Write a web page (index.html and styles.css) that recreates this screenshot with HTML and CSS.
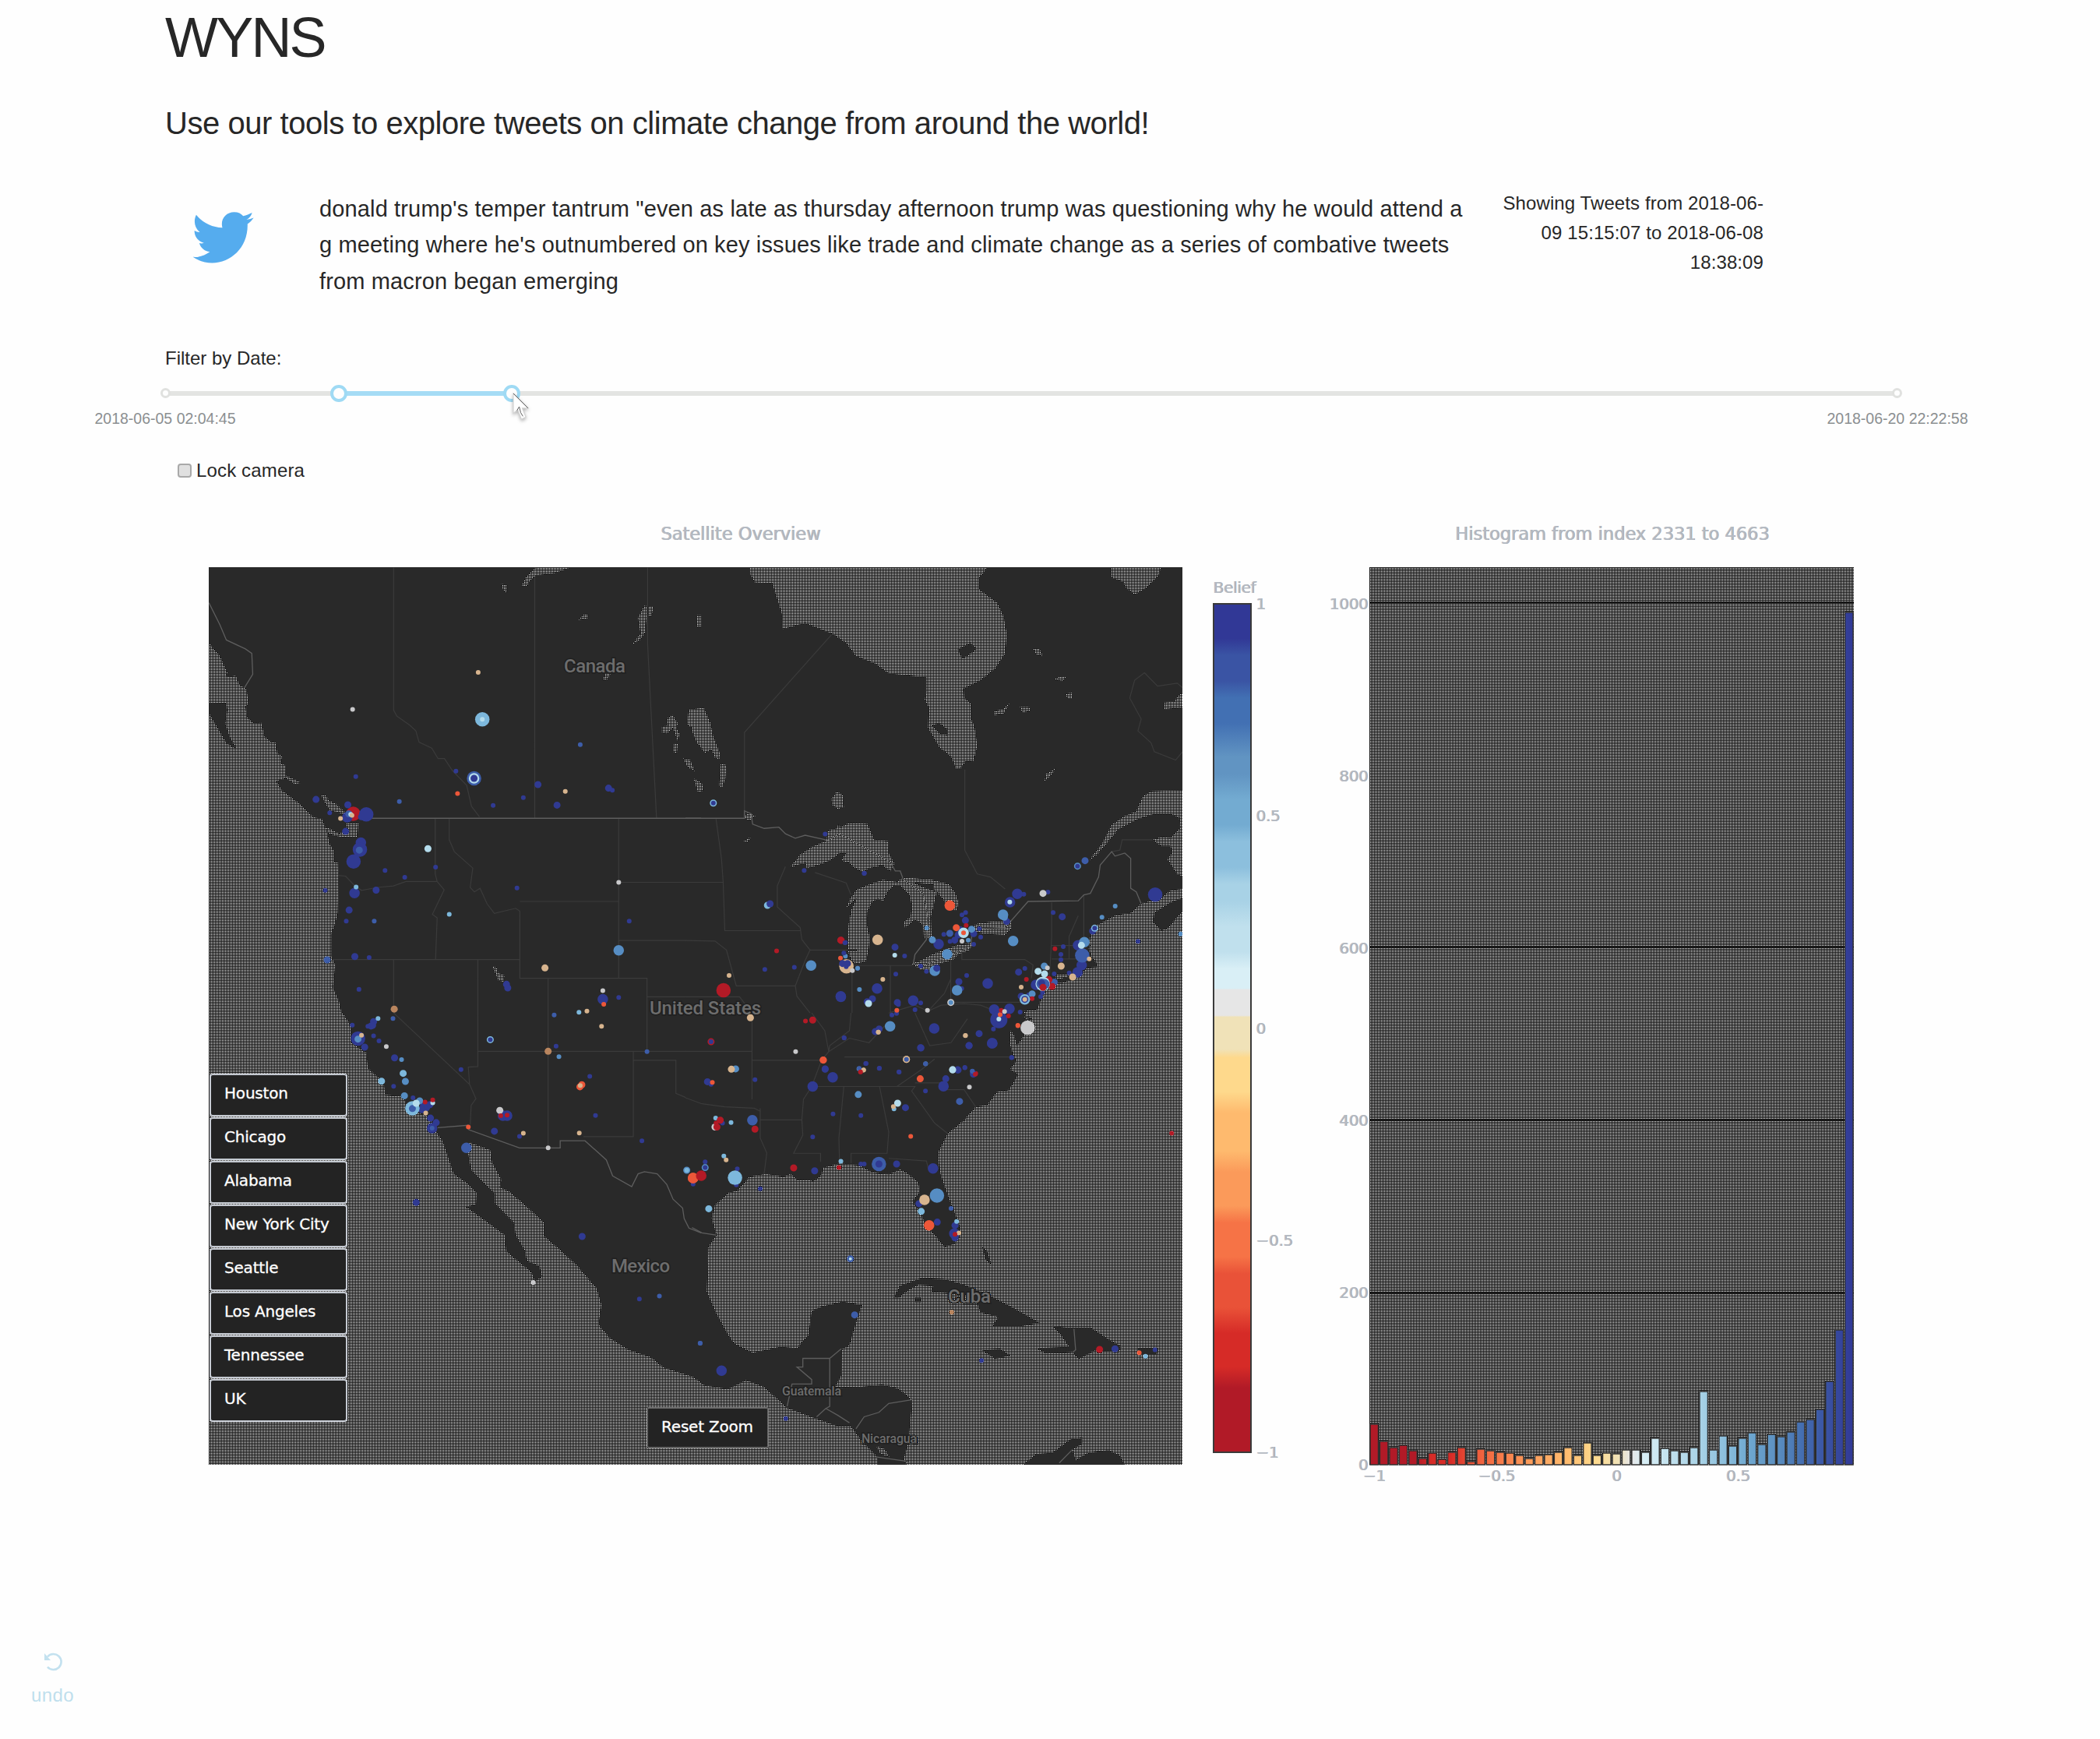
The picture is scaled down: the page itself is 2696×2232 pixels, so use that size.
FILE: index.html
```html
<!DOCTYPE html>
<html lang="en">
<head>
<meta charset="utf-8">
<title>WYNS</title>
<link rel="stylesheet" href="styles.css">
</head>
<body>
<main class="page">
<h1 class="title"><span>WYNS</span></h1>
<h2 class="subtitle"><span>Use our tools to explore tweets on climate change from around the world!</span></h2>

<section class="tweet">
<svg class="bird" viewBox="0 0 240 202"><path fill="#55acee" d="M2 178C28 180 48 172 68 158C47 156 32 142 27 124C34 126 40 125 45 123C22 117 8 98 8 75C15 79 22 81 29 81C9 65 3 38 15 14C40 44 76 62 117 64C108 31 130 3 163 3C179 3 190 9 198 18C211 15 221 11 233 5C229 18 221 27 211 32C221 31 230 29 239 25C232 35 225 43 215 49C218 140 151 201 77 201C50 201 24 193 2 178Z"/></svg>
<p class="tweet-text"><span>donald trump's temper tantrum "even as late as thursday afternoon trump was questioning why he would attend a</span><br><span>g meeting where he's outnumbered on key issues like trade and climate change as a series of combative tweets</span><br><span>from macron began emerging</span></p>
<p class="range-text"><span>Showing Tweets from 2018-06-</span><br><span>09 15:15:07 to 2018-06-08</span><br><span>18:38:09</span></p>
</section>

<label class="filter-label">Filter by Date:</label>
<div class="slider">
<div class="rail"></div><div class="track"></div>
<i class="dot start"></i><i class="dot end"></i>
<i class="handle low"></i><i class="handle high"></i>
<span class="mark first">2018-06-05 02:04:45</span><span class="mark last">2018-06-20 22:22:58</span>
<svg class="cursor" viewBox="0 0 24 38"><path d="M2 1V28L8 23L13 36L19 33L14 21H22Z" fill="#fff" stroke="#d4d4d4" stroke-width="1.2"/><path d="M2 1L22 21M7 24L10 19L12 27L15 32" fill="none" stroke="#555" stroke-width="1"/></svg>
</div>
<label class="lock"><i class="box"></i>Lock camera</label>

<section class="plots">
<div class="map-col">
<h3 class="plot-title"><span>Satellite Overview</span></h3>
<div class="map-row">
<div class="map">
<svg class="map-svg" viewBox="268 728 1250 1152">
<defs>
<pattern id="sea" x="268" y="728" width="2" height="2" patternUnits="userSpaceOnUse"><rect width="2" height="2" fill="#191919"/><rect x="1" y="1" width="1" height="1" fill="#fff"/></pattern>
<clipPath id="water">
<path transform="translate(260 720) scale(.408163 .382653)" d="M20 275L35 295 55 320 65 345 78 375 72 390 105 385 115 415 138 430 145 475 135 490 140 525 160 545 185 543 195 590 212 605 230 610 235 645 250 655 245 680 260 685 262 720 300 738 308 745 290 748 262 728 232 738 250 770 300 810 350 860 375 865 390 905 400 950 412 970 412 1010 425 1010 428 1070 425 1180 417 1215 405 1250 405 1325 417 1355 410 1430 430 1480 440 1530H20ZM373 785L385 785 400 805 420 815 445 840 450 850 430 845 400 835 385 810ZM452 880L490 880 487 925 440 928 400 915 385 895 395 895 430 915 450 905 455 895ZM940 77L958 80 958 108 945 95ZM1003 85L1020 50 1050 22 1155 22 1110 40 1050 48 1030 65 1020 85ZM1183 198L1200 180 1213 178 1210 192ZM1370 190L1390 150 1418 155 1412 185 1397 180 1392 240 1375 265 1350 280 1378 245ZM1258 400L1268 378 1284 376 1275 395ZM1460 530L1478 517 1495 545 1490 560 1500 580 1495 605 1480 560 1460 578 1445 575 1445 555 1465 553ZM1483 615L1495 612 1492 645 1482 640ZM1512 662L1535 670 1548 705 1525 690ZM912 1360L925 1365 930 1382 950 1390 945 1412 930 1405Z"/>
<path transform="translate(260 1300) scale(.408163 .382653)" d="M20 -10L440 0 465 40 468 100 515 135 520 185 570 235 575 275 630 280 650 330 710 345 735 400 755 430 790 540 830 570 862 605 860 643 828 650 880 690 950 745 955 800 1035 870 1045 900 1068 885 1060 850 1020 832 1015 800 985 745 980 705 920 640 920 605 890 575 845 525 835 470 840 435 905 460 910 500 940 560 935 585 965 600 1020 650 1075 705 1075 750 1130 800 1180 850 1240 925 1255 980 1245 1045 1280 1090 1340 1130 1410 1155 1450 1190 1540 1220 1568 1240V1516H20Z"/>
<path transform="translate(880 720) scale(.420918 .382653)" d="M197 21L198 45 212 72 265 75 275 110 295 180 297 228 365 208 450 245 490 275 520 318 580 345 620 377 735 390 735 440 730 465 742 490 740 560 775 625 810 655 825 695 838 697 855 670 878 672 890 620 885 580 880 550 870 530 872 480 850 460 848 428 900 400 945 360 975 310 980 245 970 185 950 140 895 95 893 60 915 30 920 21ZM1297 21L1300 55 1335 70 1345 90 1370 113 1405 90 1430 65 1442 50 1450 21ZM35 182H47V220H33ZM1060 293L1078 293 1090 318 1070 313ZM1125 398L1140 388 1160 390 1150 402ZM1160 445L1178 442 1180 460 1165 462ZM943 503L968 498 988 478 970 512 943 517ZM1020 490L1048 490 1052 502 1028 508ZM1095 740L1100 715 1130 695 1110 725ZM1460 475L1490 472 1510 445H1516V490L1460 497ZM10 500L55 492 75 540 85 590 105 645 103 665 90 660 80 632 60 643 35 610 20 570 22 558 5 550ZM0 665L15 668 28 705 15 695ZM25 730L50 745 55 770 38 775ZM108 680L125 685 122 730 112 760 103 755ZM178 862L190 845 213 855 195 870ZM178 940L200 925 190 942ZM445 800L462 773 480 785 483 825 465 832 450 820ZM320 1027L350 985 385 960 430 938 435 905 462 897 467 880 470 895 500 878 555 882 575 935 618 940 620 980 637 1015 625 1040 600 1020 560 1030 540 1042 510 1025 500 1012 475 1005 490 980 470 980 440 1005 405 1020 370 1030 365 1012ZM1230 1005L1270 950 1300 885 1340 855 1375 840 1395 790 1420 773 1516 768V1058L1500 1050 1470 1000 1485 980 1480 955 1450 955 1425 935 1455 925 1480 930 1510 895 1505 860 1480 848 1430 848 1380 865 1320 900 1290 940 1255 985ZM1516 1100L1480 1105 1450 1130 1390 1150 1360 1180 1310 1190 1250 1225 1235 1260 1230 1300 1240 1330 1255 1350 1258 1362 1225 1365 1200 1395 1150 1415 1130 1415 1100 1440 1085 1470 1070 1510 1030 1510 1050 1545 1030 1530H1516ZM1130 1385H1175L1165 1395 1130 1405Z"/>
<path transform="translate(1050 1020) scale(.333333)" d="M110 435L125 400 150 365 200 345 250 328 300 335 320 345 290 352 270 370 250 410 235 400 210 410 190 450 188 500 200 550 195 600 185 640 150 652 130 640 115 600 118 500 130 440 150 400 140 405ZM300 340L330 318 440 328 505 345 530 380 542 415 535 445 510 440 480 400 458 372 452 400 435 470 438 545 425 555 408 550 405 500 375 480 335 512 332 490 357 470 362 430 355 390 325 355ZM360 650L395 640 440 615 480 600 540 578 600 572 580 600 540 615 520 635 470 650 430 672 400 675ZM590 510L620 495 690 487 745 485 745 515 720 540 640 535 590 525Z"/>
<path transform="translate(880 1300) scale(.420918 .382653)" d="M1040 -10L1055 20 1030 80 1012 110 1000 70 985 55 990 60 988 100 1000 140 1010 160 990 190 1015 205 1000 235 985 260 950 265 920 310 885 315 850 360 800 405 770 470 775 530 790 580 810 640 835 710 840 745 820 775 790 785 760 745 735 715 715 670 692 633 715 600 710 570 680 540 655 525 620 542 570 535 530 512 470 505 420 520 415 545 390 565 380 562 340 560 320 540 300 550 245 540 195 550 160 595 130 605 90 645 80 690 95 745 70 785 65 935 95 1010 130 1080 150 1110 205 1140 290 1120 340 1125 375 1080 385 1000 415 985 480 968 538 980 520 1040 500 1115 475 1130 478 1210 455 1258 530 1255 600 1247 650 1260 692 1300 685 1380 680 1440 665 1500 675 1516H1516V-10ZM0 1222L60 1250 130 1262 185 1232 240 1255 310 1325 370 1350 460 1385 505 1387 540 1440 585 1490V1516H0ZM583 1455L605 1460 622 1488 595 1480Z"/>
</clipPath>
</defs>
<rect x="268" y="728" width="1250" height="1152" fill="#292929"/>
<rect x="268" y="728" width="1250" height="1152" fill="url(#sea)" clip-path="url(#water)" shape-rendering="crispEdges"/>
<g class="land">
<path transform="translate(260 720) scale(.408163 .382653)" d="M20 475L75 478 78 500 72 545 85 590 105 625 100 628 75 610 50 565 20 510Z"/>
<path transform="translate(880 720) scale(.420918 .382653)" d="M830 297L868 275 888 295 860 318 845 328ZM750 550L775 545 800 565 800 585 775 580ZM1516 1130L1480 1145 1430 1180 1427 1210 1450 1240 1470 1232 1516 1175Z"/>
<path transform="translate(1050 1020) scale(.333333)" d="M365 337L445 345 450 372 400 355Z"/>
<path transform="translate(880 1300) scale(.420918 .382653)" d="M635 955L655 915 720 890 790 893 850 912 930 950 1000 990 1080 1040 1020 1052 935 1052 955 1020 900 1005 890 975 850 945 800 940 750 935 755 915 710 912 680 930 650 955ZM700 955H718V970H700ZM903 1130L960 1127 990 1150 945 1160ZM1118 1050L1160 1055 1235 1055 1290 1095 1330 1120 1320 1138 1250 1132 1200 1160 1180 1138 1100 1143 1072 1125 1170 1120 1145 1080ZM1380 1125H1440L1438 1145 1385 1147ZM905 785L920 800 935 850 915 825ZM1030 1516L1070 1480 1120 1475 1175 1430 1210 1425 1210 1445 1180 1465 1190 1500 1230 1475 1290 1467 1325 1485 1340 1516Z"/>
</g>
<g class="border">
<path transform="translate(260 720) scale(.408163 .382653)" d="M601 22V500l10 20 40 30 20 20 10 38 40 20 20 35 20 0 25 40 45 50 15 70 25 35M1045 22V862M1400 22V280L1428 862M732 865V1050L738 1075 760 1103 723 1185 738 1197 733 1337M776 865V935L792 975 850 1030 842 1095 855 1110 873 1098 895 1150 918 1182 985 1165 998 1175V1400H1398V1516M998 1142H1309V862M1309 1078H1520M1309 1273H1520M1309 1142V1400M412 1337H998M428 1055L450 1057 475 1085 500 1105 550 1095 600 1090 640 1075H738M601 1337V1516M866 1337V1516M1087 1400V1516M1398 1462H1520"/>
<path transform="translate(260 1300) scale(.408163 .382653)" d="M601 0L840 240 860 288 845 310 842 375M866 0V180l-30 2 4 60M866 129H1520M1087 0V453M1398 0V129M1355 129V415H1198M1355 159H1489V270l31 14"/>
<path transform="translate(880 720) scale(.420918 .382653)" d="M180 863V575L445 248M852 700V970L890 1050 930 1060 975 1100M93 863L110 1000 115 1078H0M115 1078L120 1240H350M0 1273L90 1275 125 1305 155 1425H335M0 1462H165L203 1516M305 1025L280 1090 280 1160 350 1230 355 1270 380 1305 365 1340 335 1425 340 1460 380 1516M380 1305H525M508 1350V1516M625 1357V1516M508 1357H695M843 1305V1337H1035L1060 1355 1055 1400M809 1337V1480H1030M1117 1145V1260L1110 1400M1198 1190L1170 1260V1335M1215 1120V1290M1117 1290H1235M1117 1335H1190M1400 375L1370 400 1355 460 1390 530 1380 570 1420 610 1430 640 1495 668 1516 640M1400 375L1440 420 1500 410 1516 425M1425 935L1332 935 1325 970 1300 975M395 1045L490 1080 505 1120M620 1516L700 1490 740 1510 790 1450 810 1400M740 1510L780 1490 850 1485 900 1490 960 1516"/>
<path transform="translate(880 1300) scale(.420918 .382653)" d="M0 129H203M203 0V290M203 159H415L437 130M485 148H1005M385 0L425 60 437 130 440 110 500 60 505 0M385 247H700L690 262 760 370 800 405M645 247L720 190 760 155M483 247L468 420 470 505M592 247L620 400 615 471H505V505M620 488L735 497 740 520M228 359H355L360 290 385 247 415 159M355 359L358 410 330 471H412V500M228 320V420L248 470 240 540M0 285L50 305 120 315 210 320 228 330M700 235H780L800 258H850L885 315M437 130L500 85 560 100 620 30M700 0L745 110 810 100 860 20"/>
</g>
<g class="border nation">
<path transform="translate(260 720) scale(.408163 .382653)" d="M20 140L55 215 75 265 135 295 155 310 158 380 132 425M533 863H1568"/>
<path transform="translate(260 1300) scale(.408163 .382653)" d="M740 385L835 377 838 392 997 453H1125V429H1203L1270 493 1290 547 1350 583 1370 540 1390 533 1430 540 1460 575 1480 625 1510 655 1515 690 1530 722 1568 738"/>
<path transform="translate(880 720) scale(.420918 .382653)" d="M0 863H180V838l20 10 5 35L240 897 285 893 305 915 335 930 365 920 435 937 470 915 625 1010 640 1040 655 1040 665 1070 725 1115 740 1200 735 1270 700 1320 695 1350 720 1360 870 1295 875 1235 975 1230 1045 1142 1198 1140 1215 1120 1235 1115 1260 1060 1265 1020 1300 975 1310 990 1340 980 1358 998V1098L1375 1110 1390 1150"/>
<path transform="translate(880 1300) scale(.420918 .382653)" d="M20 720L50 738 92 745M310 1320L325 1245H385V1230L340 1188H358V1159H440V1258M440 1159L475 1127M440 1258V1320L428 1327 400 1355M428 1327L465 1350 500 1375M520 1395L545 1355 590 1340 620 1310 690 1298M585 1490L680 1505M1140 1510L1180 1465M1185 1060L1190 1130 1180 1140"/>
</g>
<g class="country">
<text x="724" y="863" textLength="79">Canada</text><text x="834" y="1302" textLength="143">United States</text><text x="785" y="1633" textLength="75">Mexico</text><text x="1217" y="1672" textLength="55">Cuba</text><text class="minor" x="1004" y="1791" textLength="76">Guatemala</text><text class="minor" x="1106" y="1852" textLength="71">Nicaragua</text>
</g>
<g class="pts" transform="translate(260 720) scale(.408163 .382653)">
<path class="red xl" d="M474 848h.1"/>
<path class="navy s" d="M482 723h.1M797 705h.1M914 820h.1M1009 794h.1M733 1027h.1M636 1061h.1M452 1208h.1M524 1330h.1M492 1437h.1M1342 1208h.1M989 1097h.1M574 1038h.1M386 1105h.1M471 1557h.1M1309 1464h.1M1289 769h.1M400 845h.1"/>
<path class="navy m" d="M357 800h.1M1055 750h.1M1115 819h.1M1277 762h.1M461 1171h.1M479 1327h.1M450 907h.1M500 858h.1M546 1104h.1M956 1420h.1M960 1432h.1M538 1545h.1M530 1560h.1M457 818h.1"/>
<path class="navy l" d="M455 860h.1M498 945h.1M478 1114h.1M1259 1470h.1"/>
<path class="navy xl" d="M515 850h.1M495 968h.1M475 1008h.1"/>
<path class="blue s" d="M1188 616h.1M619 807h.1M540 1208h.1M1106 1523h.1M599 1535h.1"/><path class="blue m" d="M392 1338h.1M493 970h.1M460 848h.1"/><path class="blue xl" d="M854 729h.1"/>
<path class="ice l" d="M854 729h.1"/><path class="navy m" d="M854 729h.1"/>
<path class="sky xl" d="M880 531h.1"/><path class="ice s" d="M880 531h.1M466 850h.1"/>
<path class="steel l" d="M1309 1306h.1"/><path class="ice m" d="M709 965h.1"/>
<path class="sky s" d="M776 1185h.1M483 1094h.1M552 1535h.1M1184 1514h.1"/>
<path class="tan s" d="M867 374h.1M434 864h.1M1141 773h.1M1209 1510h.1M1255 1561h.1M470 853h.1"/><path class="tan m" d="M1077 1365h.1"/><path class="dtan m" d="M603 1503h.1"/>
<path class="orange s" d="M802 780h.1M1262 1487h.1"/><path class="white s" d="M472 498h.1M1309 1078h.1M1259 1441h.1"/>
</g>
<g class="pts" transform="translate(260 1300) scale(.408163 .382653)">
<path class="navy xl" d="M489 86h.1"/><path class="navy l" d="M722 387h.1M945 345h.1M958 345h.1M700 315h.1"/>
<path class="navy m" d="M535 42h.1M510 115h.1M604 151h.1M715 308h.1M735 368h.1M690 325h.1M672 636h.1M918 397h.1M1194 750h.1M717 353h.1M663 318h.1"/>
<path class="navy s" d="M520 45h.1M538 77h.1M555 94h.1M601 246h.1M662 285h.1M813 190h.1M1112 112h.1M1218 213h.1M1236 344h.1M1382 429h.1M997 414h.1M1374 960h.1M1543 574h.1"/>
<path class="blue l" d="M830 453h.1"/><path class="blue s" d="M1437 950h.1M1565 1108h.1M638 232h.1M1398 130h.1M722 387h.1"/>
<path class="steel m" d="M489 88h.1M635 278h.1M638 230h.1M1523 528h.1M683 295h.1"/><path class="steel s" d="M626 157h.1M1121 147h.1"/>
<path class="sky m" d="M563 229h.1M631 203h.1M905 90h.1"/><path class="navy s" d="M905 90h.1"/>
<path class="sky xl" d="M660 320h.1"/><path class="blue m" d="M660 321h.1"/><path class="ice m" d="M672 303h.1"/><path class="ice s" d="M724 302h.1"/>
<path class="tan s" d="M500 75h.1M1009 404h.1M1185 403h.1M702 336h.1"/><path class="dtan m" d="M1087 129h.1"/>
<path class="white s" d="M578 113h.1M1087 453h.1M1040 904h.1"/><path class="white m" d="M935 327h.1"/>
<path class="red s" d="M700 299h.1M724 292h.1M938 345h.1M958 343h.1"/><path class="orange m" d="M1193 241h.1M1187 248h.1"/><path class="orange s" d="M836 383h.1"/><path class="tan s" d="M1188 244h.1"/><path class="orange l" d="M1543 554h.1"/>
</g>
<g class="pts" transform="translate(880 720) scale(.420918 .382653)">
<path class="red xl" d="M116 1440h.1"/><path class="red m" d="M475 1273h.1M388 1540h.1"/><path class="red s" d="M278 1308h.1M366 1543h.1"/>
<path class="navy s" d="M426 916h.1M362 1038h.1M545 1048h.1M242 1370h.1M332 1363h.1M525 1366h.1M488 1280h.1"/><path class="navy l" d="M474 1462h.1"/>
<path class="sky m" d="M85 812h.1M250 1155h.1"/><path class="navy s" d="M85 812h.1"/><path class="navy m" d="M258 1150h.1"/>
<path class="steel l" d="M383 1357h.1"/><path class="tan s" d="M133 1390h.1"/><path class="tan m" d="M198 1532h.1"/>
</g>
<g class="pts" transform="translate(1050 1020) scale(.333333)">
<path class="navy s" d="M179 302h.1M555 463h.1M569 454h.1M622 516h.1M627 548h.1M600 576h.1M509 565h.1M485 538h.1M334 621h.1M300 691h.1M573 696h.1M554 746h.1M396 802h.1M374 828h.1M285 848h.1M310 808h.1M303 842h.1M886 375h.1M793 383h.1M906 454h.1M945 585h.1M936 615h.1M936 635h.1M797 669h.1M910 690h.1M968 686h.1M779 837h.1M858 778h.1M746 1012h.1M566 1050h.1M237 1053h.1M184 1035h.1M313 1068h.1M101 936h.1M1233 565h.1M396 660h.1M418 680h.1M865 762h.1M812 770h.1M676 902h.1"/>
<path class="navy m" d="M568 484h.1M727 488h.1M941 470h.1M297 587h.1M527 560h.1M543 720h.1M306 800h.1M210 786h.1M397 975h.1M582 966h.1M621 920h.1M773 683h.1M1058 525h.1M190 797h.1M540 1060h.1M28 1057h.1M221 912h.1M236 902h.1M600 535h.1M548 520h.1M540 540h.1M783 776h.1M910 722h.1"/>
<path class="navy l" d="M768 382h.1M228 746h.1M654 727h.1M367 793h.1M448 900h.1M671 957h.1M738 824h.1M679 827h.1M1002 580h.1M1016 656h.1M1000 684h.1M740 414h.1M465 575h.1M88 776h.1M840 732h.1"/>
<path class="navy xl" d="M1299 385h.1"/><path class="navy xxl" d="M697 866h.1"/><path class="blue xl" d="M1018 619h.1"/>
<path class="steel l" d="M713 462h.1M752 563h.1M536 753h.1M278 892h.1M450 678h.1M1026 568h.1M498 614h.1"/>
<path class="steel m" d="M441 559h.1M592 518h.1M1000 275h.1M718 472h.1M825 767h.1M872 660h.1"/><path class="navy s" d="M1000 275h.1"/><path class="navy m" d="M458 668h.1"/>
<path class="blue m" d="M1029 254h.1M508 534h.1M910 722h.1"/><path class="steel s" d="M419 513h.1M579 560h.1M160 750h.1M153 668h.1M1094 472h.1M1145 429h.1M415 1036h.1M158 1055h.1M1397 536h.1M106 622h.1"/>
<path class="ice s" d="M739 413h.1M296 618h.1M697 864h.1"/><path class="ice m" d="M1015 580h.1M195 804h.1M519 1059h.1M873 690h.1M848 680h.1"/><path class="sky m" d="M1066 514h.1"/><path class="navy s" d="M1066 514h.1"/>
<path class="orange l" d="M508 427h.1"/><path class="orange m" d="M533 512h.1M21 1022h.1"/><path class="orange s" d="M87 629h.1M304 830h.1M702 847h.1M770 888h.1"/><path class="red s" d="M571 503h.1M913 593h.1M803 711h.1M825 785h.1M734 852h.1M706 830h.1M164 1067h.1M608 1073h.1"/><path class="red m" d="M890 712h.1M902 738h.1M88 560h.1"/>
<path class="tan xl" d="M110 661h.1"/><path class="navy m" d="M95 650h.1M114 650h.1"/><path class="navy s" d="M100 610h.1M109 662h.1M104 570h.1"/><path class="tan l" d="M230 559h.1"/>
<path class="tan m" d="M937 660h.1M981 702h.1"/><path class="tan s" d="M250 711h.1M568 928h.1M233 914h.1M176 1060h.1M1045 632h.1M783 741h.1"/>
<path class="ice l" d="M561 532h.1"/><path class="orange s" d="M561 532h.1"/><path class="white s" d="M555 564h.1M133 677h.1M422 830h.1M719 835h.1M884 667h.1"/><path class="white m" d="M867 380h.1M512 800h.1"/><path class="steel s" d="M512 800h.1"/>
<path class="ice xl" d="M866 728h.1"/><path class="blue l" d="M862 728h.1M872 730h.1"/><path class="navy m" d="M862 726h.1"/><path class="red m" d="M867 742h.1"/>
<path class="sky l" d="M797 788h.1"/><path class="navy m" d="M797 788h.1"/><path class="tan s" d="M797 788h.1"/>
<path class="tan m" d="M341 1019h.1"/><path class="blue s" d="M341 1019h.1M595 1064h.1"/><path class="white xl" d="M808 897h.1"/>
</g>
<g class="pts" transform="translate(880 1300) scale(.420918 .382653)">
<path class="steel m" d="M624 45h.1M527 274h.1M60 519h.1M153 188h.1"/><path class="navy s" d="M60 519h.1M60 500h.1M158 523h.1M212 224h.1M450 339h.1M535 344h.1M388 416h.1M591 186h.1M551 170h.1M651 198h.1M484 84h.1M732 262h.1M896 70h.1M995 150h.1M852 184h.1M78 240h.1M113 370h.1M228 590h.1M535 507h.1M545 507h.1M306 1361h.1M903 1166h.1M1432 1130h.1M155 577h.1"/>
<path class="navy m" d="M759 52h.1M717 117h.1M865 110h.1M426 188h.1M794 221h.1M671 318h.1M644 507h.1M830 191h.1M878 205h.1M67 231h.1M394 530h.1M712 640h.1M768 702h.1M822 713h.1M822 755h.1M1310 1127h.1"/><path class="navy l" d="M936 102h.1M388 247h.1M449 216h.1M787 246h.1M755 522h.1M820 740h.1M110 1200h.1"/>
<path class="blue xl" d="M590 507h.1"/><path class="navy m" d="M590 507h.1"/><path class="blue l" d="M204 360h.1"/><path class="blue m" d="M836 297h.1M516 1013h.1M503 825h.1"/><path class="blue s" d="M45 1108h.1M732 171h.1M530 186h.1M875 196h.1M810 656h.1"/>
<path class="steel xl" d="M767 613h.1"/><path class="sky xl" d="M151 553h.1"/><path class="sky m" d="M71 657h.1M719 666h.1"/><path class="sky s" d="M139 368h.1M117 480h.1M92 353h.1M4 528h.1M474 498h.1M636 322h.1M827 700h.1M1403 1152h.1"/>
<path class="ice m" d="M815 191h.1M647 303h.1"/><path class="ice xs" d="M503 825h.1"/><path class="white s" d="M866 249h.1M336 130h.1"/><path class="white m" d="M90 383h.1"/>
<path class="tan l" d="M729 627h.1"/><path class="tan m" d="M140 189h.1M674 156h.1"/><path class="blue s" d="M674 156h.1"/><path class="tan s" d="M588 65h.1M854 76h.1M543 192h.1M634 314h.1M124 493h.1M834 738h.1"/><path class="dtan s" d="M812 1004h.1"/>
<path class="orange m" d="M716 221h.1M420 158h.1"/><path class="orange s" d="M82 233h.1M687 414h.1M1014 43h.1M1384 1140h.1"/><path class="orange l" d="M23 554h.1M743 713h.1"/>
<path class="red l" d="M48 546h.1"/><path class="red m" d="M78 97h.1M106 360h.1M96 383h.1M212 390h.1M330 520h.1M1263 1129h.1"/><path class="navy s" d="M78 97h.1"/><path class="red s" d="M93 370h.1M534 198h.1M884 206h.1M468 519h.1M822 743h.1M1483 404h.1"/>
</g>
</svg>
<div class="cities"><button>Houston</button><button>Chicago</button><button>Alabama</button><button>New York City</button><button>Seattle</button><button>Los Angeles</button><button>Tennessee</button><button>UK</button></div>
<button class="reset">Reset Zoom</button>
</div>
<div class="belief">
<div class="belief-title">Belief</div>
<div class="belief-body"><div class="ramp"></div><div class="ticks"><span>1</span><span>0.5</span><span>0</span><span>−0.5</span><span>−1</span></div></div>
</div>
</div>
</div>

<div class="hist-col">
<h3 class="plot-title"><span>Histogram from index 2331 to 4663</span></h3>
<svg class="hist" viewBox="1690 728 720 1192">
<defs>
<linearGradient id="ramp" gradientUnits="userSpaceOnUse" x1="1764" x2="2380" y1="0" y2="0"><stop offset="0" stop-color="#b11a27"/><stop offset=".09" stop-color="#b11a27"/><stop offset=".12" stop-color="#d62b27"/><stop offset=".16" stop-color="#d62b27"/><stop offset=".2" stop-color="#e95238"/><stop offset=".25" stop-color="#f67346"/><stop offset=".32" stop-color="#fb9a5a"/><stop offset=".4" stop-color="#feba6e"/><stop offset=".46" stop-color="#fed98c"/><stop offset=".51" stop-color="#f0e2b8"/><stop offset=".535" stop-color="#e6e6e6"/><stop offset=".56" stop-color="#d9eff6"/><stop offset=".62" stop-color="#c0e0ed"/><stop offset=".68" stop-color="#a8d2e6"/><stop offset=".73" stop-color="#8cbfdd"/><stop offset=".78" stop-color="#6fa8d0"/><stop offset=".84" stop-color="#5b8fc0"/><stop offset=".89" stop-color="#456fb1"/><stop offset=".94" stop-color="#3a54a4"/><stop offset="1" stop-color="#313896"/></linearGradient>
<pattern id="weave" x="1758" y="728" width="2" height="2" patternUnits="userSpaceOnUse"><rect width="2" height="2" fill="#191919"/><rect x="1" y="1" width="1" height="1" fill="#fff"/></pattern>
</defs>
<rect x="1758" y="728" width="622" height="1152" fill="url(#weave)" shape-rendering="crispEdges"/>
<g fill="none" stroke="#161616"><path d="M1758 1438H2380M1758 1659H2380" stroke-width="2"/><path d="M1758 773.500H2380M1758 1215.500H2380" stroke-width="1"/><path d="M1758 774.500H2380M1758 1216.500H2380" stroke-width="1" stroke-dasharray="3 1"/></g>
<path fill="url(#ramp)" stroke="#333" stroke-width="1.5" d="M1759 1880v-52h10.500v52zm12.440 0v-30h10.500v30zm12.440 0v-22h10.500v22zm12.440 0v-25h10.500v25zm12.440 0v-18h10.500v18zm12.440 0v-8h10.500v8zm12.440 0v-15h10.500v15zm12.440 0v-7h10.500v7zm12.440 0v-16h10.500v16zm12.440 0v-22h10.500v22zm12.440 0v-4h10.500v4zm12.440 0v-20h10.500v20zm12.440 0v-18h10.500v18zm12.440 0v-16h10.500v16zm12.440 0v-15h10.500v15zm12.440 0v-12h10.500v12zm12.440 0v-8h10.500v8zm12.440 0v-12h10.500v12zm12.440 0v-13h10.500v13zm12.440 0v-16h10.500v16zm12.440 0v-22h10.500v22zm12.440 0v-12h10.500v12zm12.440 0v-28h10.500v28zm12.440 0v-12h10.500v12zm12.440 0v-15h10.500v15zm12.440 0v-14h10.500v14zm12.440 0v-19h10.500v19zm12.440 0v-19h10.500v19zm12.440 0v-16h10.500v16zm12.440 0v-34h10.500v34zm12.440 0v-21h10.500v21zm12.440 0v-18h10.500v18zm12.440 0v-16h10.500v16zm12.440 0v-22h10.500v22zm12.440 0v-94h10.500v94zm12.440 0v-19h10.500v19zm12.440 0v-37h10.500v37zm12.440 0v-24h10.500v24zm12.440 0v-34h10.500v34zm12.440 0v-41h10.500v41zm12.440 0v-26h10.500v26zm12.440 0v-39h10.500v39zm12.440 0v-36h10.500v36zm12.440 0v-42h10.500v42zm12.440 0v-55h10.500v55zm12.440 0v-58h10.500v58zm12.440 0v-71h10.500v71zm12.440 0v-107h10.500v107zm12.440 0v-173h10.500v173zm12.440 0v-1094h10.500v1094z"/>
<g class="axis" text-anchor="end"><text x="1756" y="782">1000</text><text x="1756" y="1003">800</text><text x="1756" y="1224">600</text><text x="1756" y="1445">400</text><text x="1756" y="1666">200</text><text x="1756" y="1887">0</text></g>
<g class="axis" text-anchor="middle"><text x="1764" y="1901">−1</text><text x="1921" y="1901">−0.5</text><text x="2075" y="1901">0</text><text x="2231" y="1901">0.5</text></g>
</svg>
</div>
</section>
</main>
<div class="undo"><svg viewBox="0 0 24 24"><path d="M5 5.500A10 10 0 1 1 5 18.500" fill="none" stroke="#c3e1ef" stroke-width="2.600"/><path d="M1 1V10H9Z" fill="#c3e1ef"/></svg><span>undo</span></div>
</body>
</html>
```
FILE: styles.css
```css
* { box-sizing: border-box; margin: 0; padding: 0; }
body { background: #fefefe; color: #272727; font-family: "Liberation Sans", Arial, sans-serif; width: 2696px; height: 2232px; overflow: hidden; position: relative; }
.page { padding-left: 212px; display: flex; flex-direction: column; align-items: flex-start; }
.title { font-size: 72px; font-weight: 400; line-height: 86px; padding-top: 5px; letter-spacing: -2.8px; white-space: nowrap; }
.subtitle { font-size: 40px; font-weight: 400; line-height: 48px; margin-top: 43px; letter-spacing: -.46px; white-space: nowrap; }
.tweet { display: flex; align-items: flex-start; margin-top: 63px; height: 156px; width: 2052px; font-size: 29px; line-height: 46.300px; }
.bird { width: 79px; height: 67px; margin: 26px 84px 0 35px; flex: none; }
.tweet-text { width: 1481px; flex: none; white-space: nowrap; letter-spacing: .14px; }
.range-text { flex: 1; text-align: right; font-size: 24px; line-height: 38px; white-space: nowrap; letter-spacing: .1px; margin-top: -3px; }
.filter-label { font-size: 24px; line-height: 30px; margin-top: 44px; }
.slider { position: relative; width: 2224px; height: 90px; margin-top: 13px; }
.rail { position: absolute; left: 0; right: 0; top: 14px; height: 6px; border-radius: 3px; background: #e3e4e2; }
.track { position: absolute; left: 223px; width: 222px; top: 14px; height: 6px; background: #a5dcf5; }
.dot { position: absolute; top: 10px; width: 13px; height: 13px; border: 3px solid #e0e1df; border-radius: 50%; background: #fefefe; }
.start { left: -6px; } .end { right: -6px; }
.handle { position: absolute; top: 6px; width: 22px; height: 22px; border: 4px solid #9fdaf4; border-radius: 50%; background: #fefefe; }
.low { left: 212px; } .high { left: 434px; }
.mark { position: absolute; top: 37px; font-size: 19.500px; line-height: 24px; color: #8b8f91; white-space: nowrap; transform: translateX(-50%); }
.first { left: 0; } .last { left: 100%; }
.cursor { position: absolute; left: 445px; top: 16px; width: 23px; height: 36px; filter: drop-shadow(0 2px 2px rgba(0,0,0,.3)); }
.lock { display: flex; align-items: center; gap: 6px; margin: 11px 0 0 16px; font-size: 24px; line-height: 30px; letter-spacing: .15px; }
.box { width: 18px; height: 18px; border: 2px solid #a9a9a9; border-radius: 4px; background: #e0e0e0; }
.plots { display: flex; align-items: flex-start; margin: 52px 0 0 56px; gap: 20px; }
.map-col { width: 1402px; flex: none; }
.plot-title { height: 57px; padding-top: 0; font: 400 22.500px/28px "DejaVu Sans", Verdana, sans-serif; color: #b5bbc4; text-shadow: 1px 0 0 rgba(60,60,65,.45); white-space: nowrap; text-align: center; }
.map-col .plot-title { width: 1365px; }
.hist-col .plot-title { width: 759px; }
.map-row { display: flex; gap: 39px; }
.map { position: relative; width: 1250px; height: 1152px; flex: none; }
.map-svg { display: block; width: 1250px; height: 1152px; overflow: hidden; }
.land { fill: #292929; }
.border path { fill: none; stroke: #3b3b3b; stroke-width: 1.2px; vector-effect: non-scaling-stroke; }
.nation path { stroke: #5e5e5e; stroke-width: 1.3px; }
.country { font: 500 24px Roboto, sans-serif; fill: #6d6d6d; stroke: #202020; stroke-width: 3px; paint-order: stroke; }
.minor { font-size: 16px; }
.pts path { fill: none; stroke-linecap: round; vector-effect: non-scaling-stroke; }
.xs { stroke-width: 4px; } .s { stroke-width: 6px; } .m { stroke-width: 9px; } .l { stroke-width: 13.500px; } .xl { stroke-width: 18.500px; } .xxl { stroke-width: 22px; }
.navy { stroke: #303a92; } .blue { stroke: #3d5da9; } .steel { stroke: #568dc3; } .sky { stroke: #7db8dc; } .ice { stroke: #b4dcec; }
.white { stroke: #c9c9cb; } .tan { stroke: #d7b48e; } .dtan { stroke: #b9855e; } .orange { stroke: #ec5739; } .red { stroke: #b31a26; }
.cities { position: absolute; left: 1px; top: 650px; width: 177px; display: flex; flex-direction: column; gap: 1px; }
.cities button, .reset { font: 400 20px "DejaVu Sans", Verdana, sans-serif; color: #fff; -webkit-text-stroke: .3px #fff; background: #232323; text-align: left; letter-spacing: -.2px; white-space: nowrap; }
.cities button { height: 55px; border: 2px solid #c5cad2; border-radius: 4px; padding: 0 0 6px 17px; }
.reset { position: absolute; left: 562px; top: 1078px; width: 157px; height: 53px; border: 2px solid #666; border-radius: 3px; padding: 0 0 4px 17px; }
.belief { width: 110px; padding-top: 14px; font: 400 20px/24px "DejaVu Sans", Verdana, sans-serif; color: #b5bbc4; text-shadow: 1px 0 0 rgba(60,60,65,.45); }
.belief-title { height: 32px; letter-spacing: -.3px; }
.belief-body { display: flex; gap: 5px; height: 1091px; }
.ramp { width: 50px; border: 2px solid #3a3a3a; background: linear-gradient(#313896 0 4%, #3a54a4 6% 9%, #4270b3 11% 14%, #6194c2 18% 20%, #73abd1 23% 26%, #8cbfdd 28% 31%, #a8d2e6 33% 35%, #c0e0ed 38% 41%, #d9eff6 43% 45.300%, #e6e6e6 45.500% 48.500%, #f0e2b8 48.700% 52.500%, #fed98c 53.500% 57.500%, #feba6e 60% 64.500%, #fb9a5a 67% 71%, #f67346 73% 77%, #e95238 79% 83%, #d62b27 86% 90%, #b11a27 92.500%); }
.ticks { display: flex; flex-direction: column; justify-content: space-between; margin: -11px 0; white-space: nowrap; letter-spacing: -.3px; }
.hist-col { width: 720px; flex: none; }
.hist { display: block; width: 720px; height: 1192px; }
.axis { font: 400 20px "DejaVu Sans", Verdana, sans-serif; fill: #b5bbc4; text-shadow: 1px 0 0 rgba(60,60,65,.45); letter-spacing: -.3px; }
.undo { position: absolute; left: 40px; top: 2121px; display: flex; flex-direction: column; align-items: center; gap: 17px; color: #bfdfed; font-size: 24px; line-height: 28px; letter-spacing: .4px; }
.undo svg { width: 24px; height: 24px; }
```
